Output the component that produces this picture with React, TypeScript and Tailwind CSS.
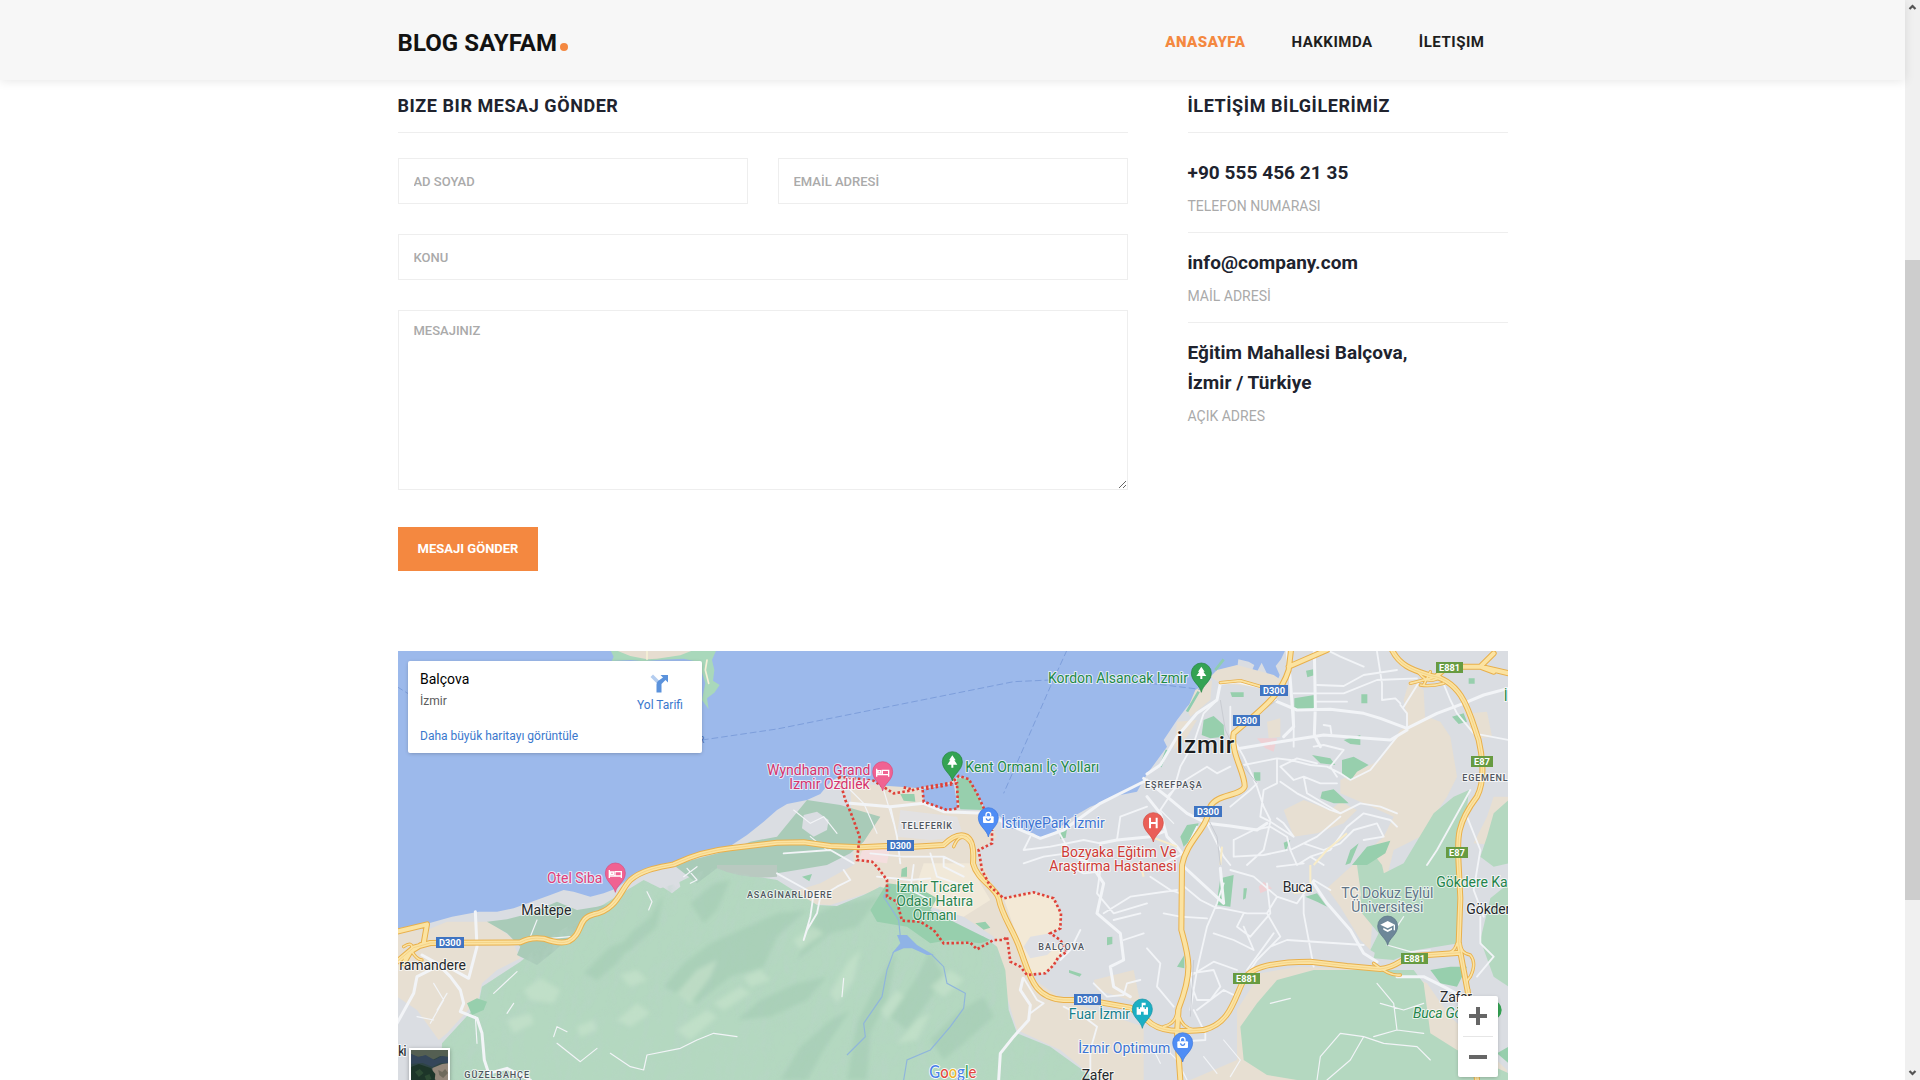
import React from "react";

const CASING = "#e9b04b";
const FILL = "#fbe3a2";
const STREET = "#f2f4f7";

/* The map canvas uses three units per screen pixel. */
const LAND =
  "M0 835L85 823L165 800L245 785L300 785L350 775L400 757L460 735L500 720L530 725L580 740L620 730L660 715L700 680L745 665L830 640L900 612L1000 588L1050 555L1100 515L1140 480L1170 462L1230 450L1270 432L1300 395L1325 380L1370 385L1430 392L1460 415L1490 430L1540 422L1580 410L1640 405L1685 380L1715 385L1740 430L1765 480L1810 500L1840 535L1910 550L1930 565L1970 550L2020 505L2080 470L2170 435L2220 425L2250 372L2270 345L2310 290L2300 270L2340 210L2370 170L2410 130L2440 85L2465 72L2495 75L2520 60L2524 28L2555 35L2572 45L2555 85L2590 95L2580 65L2594 38L2612 75L2640 95L2648 75L2636 48L2652 28L2665 0H3340V1300H0Z";

const BEIGE = [
  "M0 845L90 840L150 815L280 815L340 860L370 925L300 960L255 1000L245 1045L150 1150L125 1170L60 1080L0 1040Z",
  "M1360 400L1570 415L1580 450L1640 480L1765 485L1800 560L1740 610L1790 710L1810 745L1900 725L1970 745L1992 800L1950 850L2000 905L1960 960L1890 975L2000 1050L2120 1090L2240 1130L2240 1290L2100 1290L1990 1200L1860 1140L1830 1040L1790 860L1700 800L1450 710L1370 640Z",
  "M1140 740L1270 700L1380 640L1450 700L1440 720L1300 765L1200 760Z",
  "M3130 215L3160 260L3180 380L3150 440L3070 560L2990 600L2970 680L2930 760L2920 900L2890 870L2830 770L2790 715L2960 560L2990 500L2900 460L2830 430L2830 390L2950 330L3010 240L3090 200Z",
  "M2660 480L2720 450L2800 480L2830 455L2880 480L2840 520L2760 550L2690 560Z",
  "M2440 80L2460 60L2520 45L2630 75L2660 95L2660 120L2470 100Z",
  "M2395 120L2445 90L2440 150L2380 200L2370 180Z",
  "M2340 215L2400 210L2370 260L2330 300Z",
  "M3220 190L3270 185L3285 260L3250 265L3215 235Z",
  "M3040 80L3080 120L3085 220L3035 230L3020 150Z",
  "M3290 440L3335 440L3335 540L3290 585L3230 580L3270 500Z",
  "M2520 1080L2590 970L2700 950L3000 960L3090 1000L3160 1100L3330 1260L3330 1290L2380 1290L2520 1230Z",
  "M2090 990L2210 960L2230 1060L2100 1020Z",
  "M2610 215L2650 205L2650 260L2615 265Z",
];

const FOREST = [
  "M1140 1300H130L135 1180L245 1060L255 1010L370 935L460 860L560 800L650 745L740 690L790 715L840 700L940 650L1080 680L1140 690L1260 765L1320 768L1400 735L1450 710L1500 725L1580 790L1650 830L1760 860L1800 890L1825 960L1835 1080L1860 1150L1960 1190L2070 1270L2120 1300Z",
  "M2880 645L2920 600L2955 645L2990 800L3110 660L3130 480L3200 430L3216 420L3210 470L3190 530L3180 645L3185 880L3060 900L2960 925L2920 900L2945 850L2900 790Z",
  "M3110 490L3170 440L3216 420L3205 500L3180 600L3180 870L3080 890L2990 930L2930 925L2945 850L2895 790L2890 740L2940 680L3020 640Z",
  "M2640 990L2750 960L2900 960L3050 960L3080 1000L3100 1150L3180 1200L3335 1270V1290H2700L2610 1275L2540 1230L2530 1130L2580 1060Z",
  "M3335 450L3290 490L3270 560L3250 620L3290 650L3335 640Z",
  "M3280 745L3335 700V1010L3290 980L3250 870Z",
];

const WOODS = [
  "M270 815L330 808L400 790L480 755L540 780L600 770L640 760L560 810L520 860L470 905L420 945L360 915L370 890L330 850Z",
  "M830 645L905 625L1000 600L1060 575L1140 560L1230 450L1330 465L1450 500L1400 575L1360 610L1290 645L1200 660L1080 680L960 655L900 700Z",
];

const PARKS = [
  "M1680 385L1715 385L1740 430L1760 480L1690 478L1678 430Z",
  "M1510 432L1552 432L1555 455L1520 452Z",
  "M1470 700L1560 710L1620 745L1600 780L1700 830L1780 870L1750 880L1660 870L1600 880L1530 830L1440 815L1420 780Z",
  "M2420 210L2450 198L2480 225L2482 260L2440 265L2414 255Z",
  "M2692 145L2752 135L2752 180L2692 182Z",
  "M2500 127h40v14h-35zM2727 62l22-4 2 18-20 6zM2893 133h18v27h-18z",
  "M2840 270L2890 255L2890 285L2860 282ZM2745 315L2800 325L2815 345L2770 340ZM2835 330L2870 320L2915 345L2880 365L2860 392L2835 375Z",
  "M2775 425L2810 418L2855 460L2810 460L2770 445ZM2570 367h20v25h-18z",
  "M2350 560L2370 525L2405 520L2390 560L2360 590ZM2660 578L2680 570L2665 605Z",
  "M2860 600L2885 580L2860 640L2845 645ZM2910 590L2980 572L2965 610L2910 645L2865 645Z",
  "M2470 685L2510 675L2500 770L2458 765ZM2540 715l10 0-4 30-8 4zM2725 740L2760 730L2790 770L2760 755Z",
  "M2340 950L2362 915L2362 955ZM3165 200L3200 190L3210 215L3185 222ZM3215 85h18v16h-18z",
  "M3100 960L3160 950L3210 950L3180 1010L3130 1000ZM3160 960l50-10-20 30z",
  "M1514 657L1530 650L1530 680L1512 680ZM1735 820l30 -5 15 18-20 6zM2130 862l16-2v22l-16 4zM2016 960l38 12-6 8-32-12z",
  "M210 1060L240 1045L270 1055L260 1080L225 1095ZM1215 680l30-8-8 22zM1990 545l20-8-4 26-16 4z",
  "M3300 1210L3335 1190V1240Z",
];

const RIDGES = [
  "M640 930L700 850L760 800L800 730L780 830L700 900Z",
  "M800 1010L860 940L940 880L1050 830L1140 790L1230 780L1140 860L1100 950L1000 980L900 1060Z",
  "M1260 790L1330 760L1450 740L1380 830L1300 850L1200 930Z",
  "M560 970L640 890L720 860L660 940L600 990Z",
  "M1350 1290L1380 1120L1440 1000L1500 900L1470 1050L1420 1150L1410 1290Z",
  "M1480 1100L1560 980L1600 900L1640 980L1590 1060L1530 1140Z",
  "M1020 1110L1090 1050L1200 1000L1290 980L1230 1050L1120 1100Z",
  "M1150 1290L1210 1190L1300 1110L1360 1080L1280 1200L1230 1290Z",
  "M1600 1170L1690 1080L1760 1040L1790 1100L1700 1180L1640 1230Z",
  "M880 760L950 700L1000 690L960 780L920 820Z",
];

const LIGHTS = [
  "M380 1020L430 985L490 1020L470 1060L400 1050Z",
  "M670 975L720 960L750 990L700 1010Z",
  "M840 1030L900 960L960 930L940 980L880 1060Z",
  "M950 1060L1030 1010L1060 1030L980 1080Z",
  "M660 1110L720 1060L760 1090L700 1130Z",
  "M1040 980L1090 960L1120 990L1060 1010Z",
  "M1300 1030L1350 940L1390 900L1370 990L1320 1060Z",
  "M1500 1180L1560 1110L1600 1090L1560 1170Z",
  "M1450 1080L1500 1020L1520 1040L1470 1110Z",
  "M330 1110L400 1090L410 1120L350 1150Z",
  "M1190 870L1250 830L1280 850L1210 900Z",
  "M1600 1010L1660 960L1700 990L1640 1040Z",
  "M840 1140L930 1080L960 1100L880 1170Z",
  "M540 1130L590 1110L600 1140L550 1160Z",
];

const STREETS_WIDE = [
  "M2250 372L2290 345L2340 260L2400 190L2460 150L2470 100L2520 95L2590 110L2640 155L2700 180L2800 178L2900 190L2950 205L3030 235L3120 190L3200 160L3260 135L3335 115",
  "M2240 385L2310 440L2370 490L2430 520L2500 528L2580 540L2610 520",
  "M1360 460L1480 470L1580 460L1640 485L1765 490L1860 535L1930 565L2000 540L2110 460L2250 390",
  "M2110 580L2160 570L2260 560L2300 545",
  "M2250 440L2290 490L2310 560L2340 590L2355 610",
  "M75 915L120 940L160 980L190 1020L200 1060L190 1085L240 1105L255 1150L262 1230L275 1270L330 1255L400 1290",
  "M100 960L60 980L50 1030L0 1120",
  "M235 785L240 890L215 985L170 960",
  "M1878 985L1870 1020L1900 1065L1895 1110L1850 1160L1810 1210L1805 1290",
  "M2355 645L2480 760L2470 655M2750 700L2790 760L2860 840L2900 910L2940 935",
  "M2670 0L2680 90L2690 230L2660 260M2752 0L2755 170L2752 255L2770 290",
  "M2500 300L2650 275L2780 255L2980 270L3030 240",
  "M3000 980L3080 980L3150 1015L3230 1060",
  "M2080 640L2120 700L2100 790L2170 850L2180 930L2140 950L2150 1010L2200 1040",
];

const STREETS = [
  "M2690 130L2840 130L2940 90L3060 85M2760 105L2840 108L2900 75L3000 60M2755 155L2850 155M2780 225L2800 228L2803 250M2690 180L2690 290",
  "M2940 5L2955 100L2955 150L2995 145L3010 160M2800 5L2830 20L2900 50M3010 165L3030 190L3030 240M3135 90L3160 150L3180 190L3230 250L3335 270M3070 90L3020 170",
  "M2500 170L2500 250L2540 320L2580 410L2600 470L2620 510M2540 345L2640 325L2680 330L2740 345L2790 350L2830 370L2860 390L2920 360L2960 310L3000 260",
  "M2650 350L2690 390L2720 380L2770 400L2820 400M2640 330L2640 400L2600 420L2590 500L2620 515L2690 560L2660 520L2640 505M2720 380L2730 430L2830 490L2890 460L2950 470L3000 490",
  "M2500 470L2560 420L2580 400M2460 150L2420 190L2390 280L2350 350L2330 420L2290 480M2310 440L2350 400L2430 350L2460 370L2500 350",
  "M2650 350L2700 325L2760 340M2650 395L2700 430L2760 460L2800 480L2830 490M2750 290L2780 285L2840 300L2800 350L2820 380",
  "M2400 530L2360 610L2300 640M2430 520L2480 620L2500 645M2510 570L2570 540L2620 530L2670 560L2680 600L2720 580L2760 560L2830 500M2510 570L2510 620L2600 615L2670 600M2620 515L2600 600L2550 645",
  "M2680 600L2700 645L2740 620L2800 600L2850 530L2900 490L2980 510L3000 530M2740 620L2780 645M2720 580L2780 600L2830 580L2870 540L2940 520L2960 560L2900 570",
  "M2350 700L2410 750L2450 770L2550 790L2610 790M2480 700L2460 760L2430 830L2400 960L2380 1080M2610 700L2620 790L2560 860L2520 830L2540 790M2450 850L2510 870L2570 900L2540 830M2630 850L2550 960",
  "M2500 660L2570 680L2640 740L2700 760L2750 690L2800 720M2640 740L2610 790L2650 860L2580 930L2560 960M2620 890L2670 870L2900 885M2720 700L2720 790L2750 950M2640 650L2720 640",
  "M2380 970L2450 960L2470 1010L2440 1050L2400 1050L2385 1010ZM2385 975L2450 935L2520 960M2400 1080L2480 1020L2520 1040M2390 1080L2425 1150L2425 1170L2350 1175",
  "M2260 680L2320 720L2350 730M2300 790L2350 800L2430 805M2250 895L2290 940L2280 1010L2330 1070M2120 790L2200 740L2340 720M2110 660L2100 730L2150 790L2250 760M2180 870L2240 850M2150 810L2230 790",
  "M2050 840L2020 900L1990 930M2000 640L2060 670L2110 665M1900 560L1880 600L1960 590L2060 570L2110 580M1880 640L1940 620L2010 610L2080 640M1960 500L2010 590M2160 570L2170 500L2250 470",
  "M1420 610L1520 620L1640 620L1700 650M1480 470L1500 560L1510 640M1600 610L1620 680L1680 700M1640 620L1640 650L1700 680M1440 680L1540 690L1600 685M1550 645L1540 720L1600 750",
  "M1250 730L1240 800L1220 870L1230 840L1260 790L1270 740L1320 710L1360 690L1340 660M1140 670L1230 720M1160 610L1300 600L1370 640",
  "M2090 1000L2130 1040L2180 1035L2190 1000L2230 990M2100 1130L2080 1200L2080 1290M2100 1130L2060 1100L2000 1070M1880 985L1920 1050L1940 1060L1900 1090",
  "M3090 645L3120 600L3220 420M3210 500L3250 600L3230 720L3260 800M3250 800L3250 880L3290 920L3240 980",
];

const TRAILS = [
  "M640 1210L700 1250L740 1260L750 1215L850 1195L900 1170L950 1150L1020 1160M480 1180L550 1235L600 1195M470 1160L480 1130L510 1145M290 1030L360 965M400 860L420 810M460 865L520 860",
  "M2760 1290L2770 1220L2830 1150L2900 1160L2860 1230L2790 1290M2900 1160L2960 1180L3060 1190L3100 1230M2940 1000L2990 1060L3000 1140M2950 1060L3020 1080L3080 1060M2930 1160L3000 1140L3080 1150M2620 1060L2680 1045",
  "M2970 885L3040 905L3100 900M2300 1190L2340 1230L2370 1290M2260 1180L2290 1240M2480 1170L2530 1230L2500 1280M2420 1220L2460 1270M1460 420L1490 520",
  "M1190 480L1240 520L1280 500L1320 550M1360 420L1400 460L1440 550M750 725L765 755L755 780M1240 560L1290 600M870 655L900 690L880 700M860 680L900 650",
  "M110 1000L140 1050L100 1120M60 1100L110 1110M150 1030L120 1080M235 1100L240 1180M330 1090L350 1060",
  "M3000 830L3020 800M2290 480L2330 520M1340 985L1335 1040M780 1290",
];

const HIGHWAYS = [
  "M0 845L90 823L80 880L40 905L20 940",
  "M0 935L50 893L100 879L160 878L370 877Q400 860 440 866Q490 884 515 874C560 850 540 805 590 793C660 780 670 720 700 690C740 655 800 650 830 643C890 615 950 600 1000 595L1140 578L1220 577L1300 588L1390 592L1470 588L1550 590L1640 585Q1680 545 1710 560Q1733 575 1728 640C1740 690 1795 710 1805 745C1815 800 1850 840 1870 900C1900 980 1910 1045 2000 1050L2070 1050L2200 1073L2250 1110C2290 1150 2350 1145 2420 1140C2500 1120 2510 1050 2540 990C2560 950 2640 935 2740 935L2850 948L2950 957C3010 950 3010 920 3060 917L3190 908",
  "M2985 0C3010 50 3050 60 3100 77C3200 90 3220 200 3245 270Q3270 380 3240 440C3180 520 3180 560 3185 645L3190 745L3185 880Q3200 960 3215 1040L3240 1290",
  "M3120 77L3150 50L3250 50L3335 70M3250 50L3290 10M3250 50L3290 65",
  "M2682 0L2675 60C2650 140 2590 180 2510 250C2500 310 2545 370 2543 410C2530 440 2460 430 2440 470C2430 540 2370 570 2355 645L2353 840C2375 920 2390 960 2345 1075L2340 1150L2350 1290",
  "M2675 50L2790 0",
];

const RAMPS =
  "M3060 60Q3090 110 3130 80M3070 105Q3100 110 3140 100M3180 880Q3170 915 3130 915M3190 880Q3190 910 3220 915Q3240 940 3220 980Q3200 1000 3215 1020M2930 940Q2980 980 3010 975M1670 590Q1690 540 1720 580M2300 1130Q2340 1120 2340 1080M2345 1090Q2350 1130 2390 1140M20 890Q50 870 45 905Q60 930 75 930M3040 100L3120 80M3100 65L3080 105M2470 98L2530 92L2600 112";

const BOUNDARY =
  "M1325 380L1345 450L1362 490L1388 560L1380 630L1425 635L1440 650L1470 690L1470 740L1500 755L1515 812L1570 815L1610 840L1640 880L1720 878L1740 898L1790 870L1820 870L1830 860L1840 935L1870 950L1890 975L1945 970L1970 945L1985 920L2010 905L1990 870L1960 850L1990 835L1992 790L1970 745L1910 727L1820 745L1780 710L1755 660L1745 600L1785 580L1785 540";
const BOUNDARY_NORTH =
  "M1325 380L1430 392L1490 430L1540 422L1580 412L1665 398L1685 378L1715 387L1740 430L1765 485M1577 420L1580 455L1650 480L1683 475L1680 400L1580 418M1520 412L1545 418";

const LABEL_FONT = "Roboto, 'Noto Sans', sans-serif";

type Label = { t: string; x: number; y: number; w: number; c: string; s?: number; b?: number; i?: boolean };

const LABELS: Label[] = [
  { t: "Kordon Alsancak Izmir", x: 1953, y: 99, w: 420, c: "#1f8a47" },
  { t: "Kent Ormanı İç Yolları", x: 1705, y: 367, w: 402, c: "#1f8a47" },
  { t: "Wyndham Grand", x: 1110, y: 375, w: 310, c: "#d6336c" },
  { t: "Izmir Ozdilek", x: 1177, y: 416, w: 241, c: "#d6336c" },
  { t: "Otel Siba", x: 450, y: 700, w: 166, c: "#e0407b" },
  { t: "İstinyePark İzmir", x: 1813, y: 535, w: 310, c: "#3c74d4" },
  { t: "İzmir Ticaret", x: 1498, y: 726, w: 232, c: "#2b8550" },
  { t: "Odası Hatıra", x: 1498, y: 768, w: 230, c: "#2b8550" },
  { t: "Ormanı", x: 1547, y: 810, w: 132, c: "#2b8550" },
  { t: "Bozyaka Eğitim Ve", x: 1993, y: 621, w: 345, c: "#cf3b36" },
  { t: "Araştırma Hastanesi", x: 1957, y: 663, w: 382, c: "#cf3b36" },
  { t: "Fuar İzmir", x: 2015, y: 1107, w: 184, c: "#17808d" },
  { t: "İzmir Optimum", x: 2044, y: 1209, w: 276, c: "#3c74d4" },
  { t: "TC Dokuz Eylül", x: 2833, y: 744, w: 276, c: "#607487" },
  { t: "Üniversitesi", x: 2863, y: 786, w: 216, c: "#607487" },
  { t: "Gökdere Ka", x: 3118, y: 711, w: 214, c: "#23844a" },
  { t: "Buca Gö", x: 3048, y: 1104, w: 148, c: "#23844a", i: true },
  { t: "Maltepe", x: 373, y: 796, w: 150, c: "#26292d" },
  { t: "ramandere", x: 7, y: 960, w: 200, c: "#26292d" },
  { t: "ki", x: 3, y: 1217, w: 26, c: "#26292d" },
  { t: "Buca", x: 2657, y: 726, w: 90, c: "#26292d" },
  { t: "Gökder", x: 3208, y: 792, w: 132, c: "#26292d" },
  { t: "Zafer", x: 3129, y: 1056, w: 96, c: "#26292d" },
  { t: "Zafer", x: 2054, y: 1289, w: 96, c: "#26292d" },
  { t: "İzmir", x: 2338, y: 310, w: 174, c: "#1b1d20", s: 72, b: 500 },
  { t: "TELEFERİK", x: 1513, y: 537, w: 152, c: "#50565e", s: 27, b: 500 },
  { t: "ASAGİNARLİDERE", x: 1050, y: 744, w: 254, c: "#50565e", s: 27, b: 500 },
  { t: "BALÇOVA", x: 1924, y: 900, w: 137, c: "#50565e", s: 27, b: 500 },
  { t: "GÜZELBAHÇE", x: 202, y: 1284, w: 194, c: "#50565e", s: 27, b: 500 },
  { t: "EŞREFPAŞA", x: 2244, y: 414, w: 170, c: "#50565e", s: 27, b: 500 },
  { t: "EGEMENL", x: 3196, y: 393, w: 136, c: "#50565e", s: 27, b: 500 },
  { t: "İ", x: 3320, y: 153, w: 12, c: "#1f8a47" },
];

const SHIELDS: [string, number, number, number][] = [
  ["D300", 117, 861, 84],
  ["D300", 1470, 570, 81],
  ["D300", 2031, 1032, 81],
  ["D300", 2589, 105, 84],
  ["D300", 2508, 195, 81],
  ["D300", 2391, 468, 84],
  ["E881", 3117, 36, 81],
  ["E87", 3222, 318, 66],
  ["E87", 3147, 591, 66],
  ["E881", 2508, 969, 81],
  ["E881", 3012, 909, 81],
];

function Glyph({ kind }: { kind: string }) {
  switch (kind) {
    case "tree":
      return <path fill="#fff" d="M0-20L-10-5H-6L-15 8H-3V17H3V8H15L6-5H10Z" />;
    case "bed":
      return (
        <path fill="none" stroke="#fff" strokeWidth="4" d="M-18-10V14M-18 8H18V14M18 8V-5H-1V7M-14 3V-4H-6V3Z" />
      );
    case "bag":
      return (
        <g>
          <rect x="-16" y="-5" width="32" height="20" rx="3" fill="#fff" />
          <path fill="none" stroke="#fff" strokeWidth="4" d="M-7-5V-10A7 7 0 0 1 7-10V-5" />
          <path fill="none" stroke="#4b87ec" strokeWidth="3.5" d="M-6 1A6 6 0 0 0 6 1" />
        </g>
      );
    case "hospital":
      return <path fill="none" stroke="#fff" strokeWidth="6" d="M-10-16V16M10-16V16M-10 0H10" />;
    case "school":
      return (
        <g fill="#fff">
          <path d="M0-16L-22-5L0 6L22-5Z" />
          <path d="M-13 4L0 11L13 4V10L0 17L-13 10Z" />
          <path d="M18-4H22V12H18Z" />
        </g>
      );
    default:
      return <path fill="#fff" d="M-17 16V-6H-11V-1H-7V-6H-2V-20H10V-12H2V-6H7V-1H11V-6H17V16H4V7H-4V16Z" />;
  }
}

const PINS: [string, string, string, number, number][] = [
  ["tree", "#34a353", "#23813f", 2413, 70],
  ["tree", "#34a353", "#23813f", 1666, 336],
  ["bed", "#f06292", "#d94a7c", 1457, 366],
  ["bed", "#f06292", "#d94a7c", 655, 670],
  ["bag", "#4f8df5", "#3b76dc", 1774, 504],
  ["bag", "#4f8df5", "#3b76dc", 2357, 1179],
  ["hospital", "#ea5f57", "#cf4840", 2269, 519],
  ["school", "#6d8799", "#587184", 2972, 829],
  ["castle", "#1cafc4", "#128fa2", 2236, 1078],
];

function MapCanvas() {
  return (
    <svg
      viewBox="3 3 3330 1287"
      preserveAspectRatio="none"
      className="block h-[429px] w-[1110px]"
      style={{ fontFamily: LABEL_FONT }}
    >
      <defs>
        <filter id="soft" x="-20%" y="-20%" width="140%" height="140%">
          <feGaussianBlur stdDeviation="7" />
        </filter>
        <filter id="relief" x="0" y="0" width="100%" height="100%">
          <feTurbulence type="fractalNoise" baseFrequency="0.014 0.009" numOctaves="3" seed="8" result="n" />
          <feDiffuseLighting in="n" surfaceScale="22" diffuseConstant="1.1" lightingColor="#ffffff" result="l">
            <feDistantLight azimuth="215" elevation="55" />
          </feDiffuseLighting>
          <feColorMatrix
            in="l"
            type="matrix"
            values="0 0 0 0 0.48  0 0 0 0 0.66  0 0 0 0 0.57  -1.6 0 0 0 1.6"
          />
        </filter>
        <clipPath id="hills">
          <path d={FOREST[0]} />
        </clipPath>
      </defs>

      <rect x="0" y="0" width="3340" height="1300" fill="#9cb9eb" />
      <path d="M640 0L650 20L644 33L700 30L740 34L780 30L860 26L905 36L925 100L915 150L935 178L930 145L952 128L968 105L948 92L952 60L945 30L958 0Z" fill="#a9d8bb" />
      <path d="M655 0L700 18L750 28L780 26L850 16L890 0Z" fill="#e6ddd0" />
      <path d={LAND} fill="#dadde2" />
      {BEIGE.map((d) => (
        <path key={d} d={d} fill="#e7dfd2" />
      ))}
      <path d="M1580 640L1720 640L1750 700L1780 750L1700 800L1600 770L1560 700Z" fill="#f1e9d9" />
      <path d="M1400 590L1480 590L1470 640L1385 630Z" fill="#f4dede" />
      <path d="M1510 480L1680 500L1700 560L1600 570L1500 560Z" fill="#e2e1e2" />
      <path d="M2580 265L2640 265L2630 305L2605 295ZM2585 710L2600 695L2625 715L2590 730Z" fill="#eed0d4" />
      <path d="M1820 745L1910 727L1970 745L1992 790L1990 835L1960 850L2000 905L1945 970L1890 970L1850 830Z" fill="#f3e9d6" />
      <path d="M1900 860L1960 850L1990 880L1950 915L1900 925L1880 890Z" fill="#dfe0e4" />
      {FOREST.map((d) => (
        <path key={d} d={d} fill="#b4d8c0" />
      ))}
      {WOODS.map((d) => (
        <path key={d} d={d} fill="#a9cbb8" />
      ))}
      <path d="M1220 495L1260 485L1295 510L1290 540L1250 560L1215 535ZM770 680L800 655L840 665L850 710L825 730L780 700Z" fill="#dadde2" />
      <path d="M960 645H1140V680Q1040 690 960 655Z" fill="#b9c9c0" />
      <g clipPath="url(#hills)">
        <rect x="120" y="640" width="2020" height="660" filter="url(#relief)" opacity="0.45" />
        <g filter="url(#soft)">
          <g fill="#9cc6ad" opacity="0.4">
            {RIDGES.map((d) => (
              <path key={d} d={d} />
            ))}
          </g>
          <g fill="#c9e4cd" opacity="0.6">
            {LIGHTS.map((d) => (
              <path key={d} d={d} />
            ))}
          </g>
        </g>
      </g>
      {PARKS.map((d) => (
        <path key={d} d={d} fill="#97cfad" />
      ))}
      <path d="M1577 418L1670 400L1683 475L1645 482L1580 455Z" fill="#9cb9eb" />
      <path d="M2290 350L2310 300M2370 185L2405 125M2455 60L2480 28" stroke="#8fcdb0" strokeWidth="8" />
      <path d="M1500 855L1530 855L1560 885L1610 915L1590 915L1545 895L1520 895L1485 910L1510 880Z" fill="#8fb3e6" />
      <g fill="none" stroke="#8fb5dc" strokeWidth="3.5">
        <path d="M1490 905L1470 960L1455 1040L1400 1120L1405 1160L1350 1215M1605 915L1640 950L1650 1000L1705 1030L1700 1075L1660 1130L1600 1200L1530 1230L1520 1290M1510 860L1505 810L1460 740L1480 710" />
      </g>

      <g fill="none" stroke={STREET} strokeLinejoin="round" strokeLinecap="round">
        <path d={TRAILS.join("")} strokeWidth="3.5" />
        <path d={STREETS.join("")} strokeWidth="5.5" />
        <path d={STREETS_WIDE.join("")} strokeWidth="9" />
        <path d="M930 30L925 60L935 100M750 0V28" strokeWidth="5" stroke="#f6f0d6" />
      </g>
      <g fill="none" stroke="#f8ecc9" strokeWidth="6">
        <path d="M2750 645L2790 600L2850 550M2260 560L2340 590M2470 645L2475 590M2740 645L2740 700M2690 730L2750 720M2240 680L2230 645" />
      </g>
      <path d="M2470 150L2485 240L2540 350L2580 400M2420 480L2460 560L2470 645M2640 150L2560 210M2390 930L2380 1100" stroke="#c9ccd2" strokeWidth="3" fill="none" />

      <g fill="none" strokeLinejoin="round" strokeLinecap="round">
        <path d={RAMPS} stroke={CASING} strokeWidth="10" />
        <path d={HIGHWAYS.join("")} stroke={CASING} strokeWidth="18" />
        <path d={RAMPS} stroke={FILL} strokeWidth="5" />
        <path d={HIGHWAYS.join("")} stroke={FILL} strokeWidth="12" />
        <path d={HIGHWAYS[1]} stroke="#efc46d" strokeWidth="1.5" />
        <path d={HIGHWAYS[2]} stroke="#efc46d" strokeWidth="1.5" />
      </g>

      <g fill="none" stroke="#7d9edb" strokeWidth="3" strokeDasharray="20 9">
        <path d="M0 110L40 135M915 270L1140 237L1850 95L1960 90M2010 0L1960 110L1890 270L1820 430M2260 100L2410 118" />
      </g>
      <path d={BOUNDARY + BOUNDARY_NORTH} fill="none" stroke="#df4138" strokeWidth="8" strokeDasharray="7.5 7" />

      {SHIELDS.map(([t, x, y, w]) => (
        <g key={`${x}-${y}`}>
          <rect x={x} y={y} width={w} height="33" fill={t[0] === "D" ? "#3f74c2" : "#679b41"} />
          <text x={x + w / 2} y={y + 26} fill="#fff" fontSize="26" fontWeight="700" textAnchor="middle" textLength={w - 18} lengthAdjust="spacingAndGlyphs">
            {t}
          </text>
        </g>
      ))}

      <circle cx="3284" cy="1080" r="30" fill="#34a353" />
      {PINS.map(([kind, fill, edge, x, y]) => (
        <g key={`${x}-${y}`} transform={`translate(${x} ${y})`}>
          <path
            d="M0 57C-4 35-30 25-30-1A30 30 0 0 1 30-1C30 25 4 35 0 57Z"
            fill={fill}
            stroke={edge}
            strokeWidth="2"
          />
          <Glyph kind={kind} />
        </g>
      ))}

      {LABELS.map((l) => (
        <text
          key={`${l.t}-${l.x}`}
          x={l.x}
          y={l.y}
          fill={l.c}
          fontSize={l.s ?? 42}
          fontWeight={l.b ?? 400}
          fontStyle={l.i ? "italic" : "normal"}
          textLength={l.w}
          stroke="#ffffff"
          strokeOpacity="0.7"
          strokeWidth="6"
          strokeLinejoin="round"
          paintOrder="stroke"
        >
          {l.t}
        </text>
      ))}
      <text x="905" y="279" fontSize="27" fill="#4d6fae">R</text>

      <text
        x="1597"
        y="1285"
        fontSize="50"
        fontWeight="500"
        stroke="#fff"
        strokeWidth="5"
        paintOrder="stroke"
        textLength="141"
        lengthAdjust="spacingAndGlyphs"
        style={{ fontFamily: "Lato, sans-serif" }}
      >
        <tspan fill="#4a80e8">G</tspan>
        <tspan fill="#e0493e">o</tspan>
        <tspan fill="#f0b429">o</tspan>
        <tspan fill="#4a80e8">g</tspan>
        <tspan fill="#3aa757">l</tspan>
        <tspan fill="#e0493e">e</tspan>
      </text>
    </svg>
  );
}

function SatelliteThumb() {
  return (
    <svg viewBox="0 0 38 32" preserveAspectRatio="none" className="block h-8 w-[37px]">
      <rect width="40" height="32" fill="#2f4546" />
      <path d="M0 0H40V8L30 6L22 10L14 6L6 7L0 4Z" fill="#545f52" />
      <path d="M0 4L8 7L15 5L24 10L32 6L40 7V13L30 13L22 17L12 13L0 14Z" fill="#34465a" />
      <path d="M22 18L32 14L40 13V32H27L22 26Z" fill="#94877a" />
      <path d="M0 17L8 14L20 18L25 24L24 32H0Z" fill="#1d3529" />
      <path d="M28 20l4 2 3-3 3 4-5 5-4-3z" fill="#6f6a5c" />
      <path d="M4 22l5-3 4 4-5 4zM14 26l5-2 2 5-5 2z" fill="#2c4a33" />
    </svg>
  );
}

function PlaceCard() {
  return (
    <div className="absolute left-[10px] top-[10px] flex h-[92px] w-[294px] justify-between rounded-[2px] bg-white pl-[12.5px] pr-[18.5px] shadow-[0_1px_4px_-1px_rgba(0,0,0,0.3)]">
      <div className="flex flex-col">
        <div className="mt-2 text-[14px] leading-5 text-black">Balçova</div>
        <div className="mt-1 text-[12px] leading-4 text-[#5b5b5b]">İzmir</div>
        <a className="mt-[19px] text-[12px] leading-4 text-[#3a78cd]">Daha büyük haritayı görüntüle</a>
      </div>
      <div className="flex flex-col items-center pt-[13px]">
        <svg viewBox="0 0 18 19" className="mr-[3px] h-[19px] w-[18px]">
          <path d="M0.5 3L3 0.5L10 7.5L7.5 10Z" fill="#b4cdf0" />
          <path d="M10.5 1H18V8.500L15.500 6L11.500 10V18.500H6.500V10.500Q6.500 8.500 8 7L13 3.500Z" fill="#5b92dc" />
        </svg>
        <div className="mt-[4px] text-[12px] leading-4 text-[#3a78cd]">Yol Tarifi</div>
      </div>
    </div>
  );
}

function ZoomControl() {
  return (
    <div className="absolute left-[1060px] top-[345px] flex h-[81px] w-10 flex-col items-center rounded-[2px] bg-white shadow-[0_1px_4px_-1px_rgba(0,0,0,0.3)]">
      <div className="flex h-10 items-center justify-center">
        <svg viewBox="0 0 18 18" className="h-[18px] w-[18px]">
          <path d="M7 0h4v7h7v4h-7v7H7v-7H0V7h7z" fill="#666" />
        </svg>
      </div>
      <div className="h-px w-[30px] bg-[#e6e6e6]" />
      <div className="flex h-10 items-center justify-center">
        <div className="h-1 w-[18px] bg-[#666]" />
      </div>
    </div>
  );
}

const FIELD =
  "block w-full border border-[#eee] bg-white px-[15px] text-[13px] font-medium text-[#aaa] outline-none placeholder:text-[#aaa] placeholder:opacity-100";

const CONTACTS = [
  { lines: ["+90 555 456 21 35"], label: "TELEFON NUMARASI" },
  { lines: ["info@company.com"], label: "MAİL ADRESİ" },
  { lines: ["Eğitim Mahallesi Balçova,", "İzmir / Türkiye"], label: "AÇIK ADRES" },
];

export default function App() {
  return (
    <div className="flex h-[1080px] w-[1920px] overflow-hidden bg-white font-['Roboto',sans-serif]">
      <div className="flex w-[1905px] flex-col">
        <header className="relative z-10 h-[80px] shrink-0 bg-[#f7f7f7] shadow-[0_1px_10px_rgba(0,0,0,0.1)]">
          <div className="mx-auto flex h-full w-[1110px] items-center justify-between pr-[23px]">
            <div className="mt-[5px] flex items-baseline text-[24px] font-bold leading-none tracking-[0.08px] text-[#121212]">
              <span>BLOG SAYFAM</span>
              <span className="ml-[3px] h-2 w-2 rounded-full bg-[#f48840]" />
            </div>
            <nav className="mt-[5px] flex gap-[46px] text-[15px] font-bold tracking-[0.53px] text-[#1e1e1e]">
              <a className="font-black text-[#f48840]">ANASAYFA</a>
              <a>HAKKIMDA</a>
              <a>İLETIŞIM</a>
            </nav>
          </div>
        </header>

        <main className="mx-auto w-[1110px]">
          <div className="flex justify-between">
            <section className="w-[730px]">
              <h2 className="h-[53px] border-b border-[#eee] pt-[13px] text-[18px] font-bold leading-[26px] tracking-[0.55px] text-[#20232e]">
                BIZE BIR MESAJ GÖNDER
              </h2>
              <form className="mt-[25px]">
                <div className="grid grid-cols-2 gap-[30px]">
                  <input className={`${FIELD} h-[46px]`} placeholder="AD SOYAD" />
                  <input className={`${FIELD} h-[46px]`} placeholder="EMAİL ADRESİ" />
                </div>
                <input className={`${FIELD} mt-[30px] h-[46px]`} placeholder="KONU" />
                <textarea className={`${FIELD} mt-[30px] h-[180px] resize py-[10px] leading-[20px]`} placeholder="MESAJINIZ" />
                <button
                  type="button"
                  className="mt-[37px] block h-[44px] w-[140px] bg-[#f48840] pl-px text-[13px] font-bold text-white"
                >
                  MESAJI GÖNDER
                </button>
              </form>
            </section>

            <section className="w-[320px]">
              <h2 className="h-[53px] border-b border-[#eee] pt-[13px] text-[18px] font-bold leading-[26px] tracking-[0.58px] text-[#20232e]">
                İLETİŞİM BİLGİLERİMİZ
              </h2>
              <ul className="mt-[10px]">
                {CONTACTS.map((c) => (
                  <li key={c.label} className="border-b border-[#eee] pb-[11px] pt-[15px] last:border-0">
                    {c.lines.map((line) => (
                      <p key={line} className="text-[19px] font-bold leading-[30px] tracking-[0.05px] text-[#20232e]">
                        {line}
                      </p>
                    ))}
                    <p className="mt-[3px] text-[14px] leading-[30px] text-[#aaa]">{c.label}</p>
                  </li>
                ))}
              </ul>
            </section>
          </div>

          <div className="relative mt-[80px] h-[429px] overflow-hidden">
            <MapCanvas />
            <PlaceCard />
            <div className="absolute left-[11px] top-[397px] border-2 border-white shadow-[0_1px_4px_rgba(0,0,0,0.3)]">
              <SatelliteThumb />
            </div>
            <ZoomControl />
          </div>
        </main>
      </div>

      <div className="flex w-[15px] flex-col items-center justify-between bg-[#f0f0f0]">
        <svg viewBox="0 0 15 15" className="h-[15px] w-[15px]">
          <path d="M4.500 9L7.500 6L10.500 9" fill="none" stroke="#555" strokeWidth="2.200" />
        </svg>
        <div className="mb-[165px] mt-auto h-[640px] w-[15px] bg-[#cdcdcd]" />
        <svg viewBox="0 0 15 15" className="h-[15px] w-[15px]">
          <path d="M4.500 6L7.500 9L10.500 6" fill="none" stroke="#555" strokeWidth="2.200" />
        </svg>
      </div>
    </div>
  );
}
